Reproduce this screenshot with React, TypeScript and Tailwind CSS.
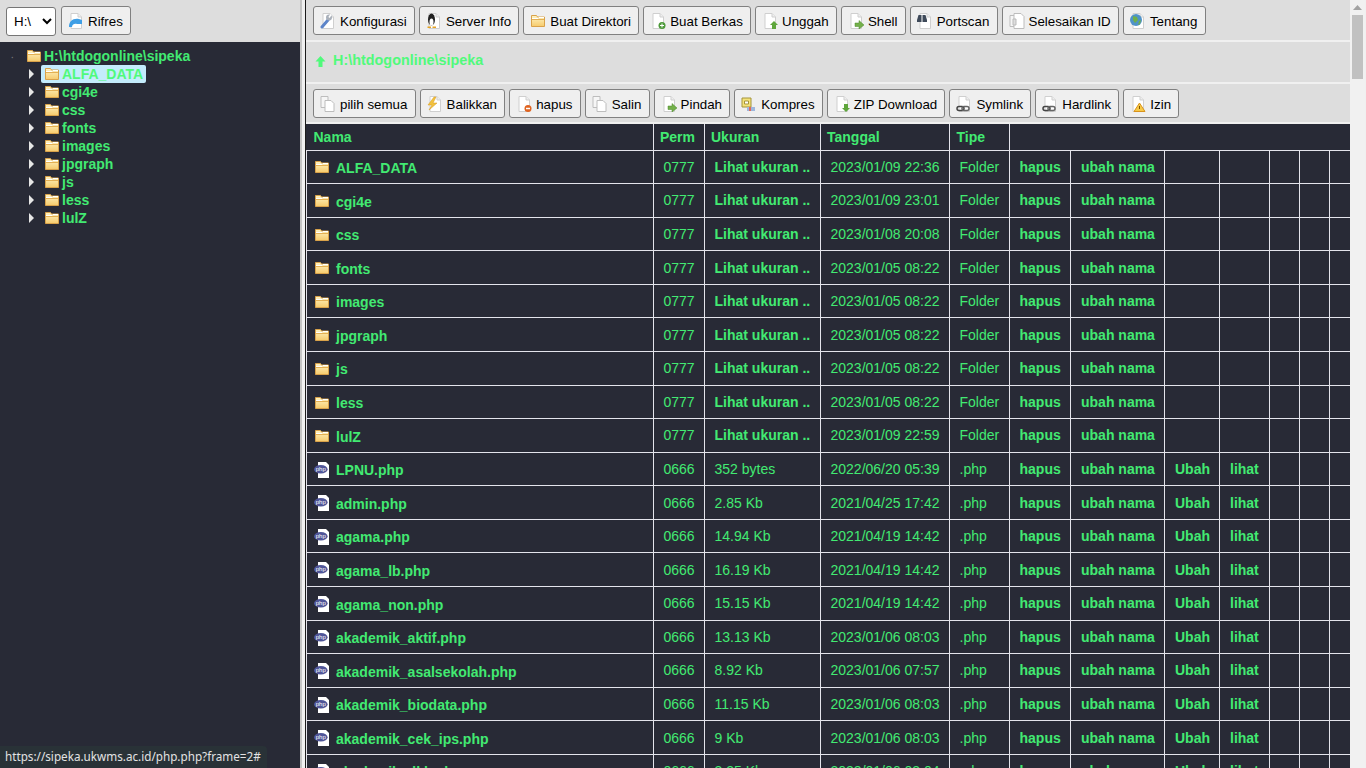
import React from "react";

const GREEN = "text-[#42ea72]";

const Page = ({ children }: { children?: React.ReactNode }) => (
  <svg width="16" height="16" viewBox="0 0 16 16" className="shrink-0">
    <path d="M3 .5h7l3.500 3.500v11.500H3z" fill="#fff" stroke="#cfcfcf" />
    <path d="M10 .5V4h3.500" fill="#eee" stroke="#cfcfcf" />
    {children}
  </svg>
);

const Folder = () => (
  <svg width="16" height="16" viewBox="0 0 16 16" className="shrink-0">
    <defs>
      <linearGradient id="fold" x1="0" y1="0" x2="0" y2="1">
        <stop offset="0" stopColor="#fff4c4" />
        <stop offset="1" stopColor="#f6cb6c" />
      </linearGradient>
    </defs>
    <path d="M1.500 13.500V2.500h5l1 1.500h7v9.500z" fill="url(#fold)" stroke="#d9a24a" />
    <path d="M2 5.500h6l1-1h5" stroke="#fff" fill="none" />
    <path d="M2 6.500h12" stroke="#e3b054" />
  </svg>
);

const PhpIcon = () => (
  <svg width="16" height="16" viewBox="0 0 16 16" className="shrink-0">
    <path d="M4 0h8l3 3v13H4z" fill="#fff" />
    <ellipse cx="6.800" cy="7.300" rx="6.800" ry="4.300" fill="#4f5598" />
    <text x="6.800" y="9.300" textAnchor="middle" fontSize="6" fontFamily="Liberation Sans" fontWeight="400" fill="#ffffff">php</text>
  </svg>
);

const wrench = (
  <Page>
    <path d="M2 14l6-7" stroke="#5d85c9" strokeWidth="3" strokeLinecap="round" />
    <circle cx="9" cy="4.500" r="3" fill="#aab1bb" />
    <path d="M9 4.500l2-3" stroke="#fff" strokeWidth="1.500" />
  </Page>
);
const tux = (
  <Page>
    <ellipse cx="5.500" cy="6.500" rx="3.500" ry="6" fill="#222" />
    <ellipse cx="5.500" cy="9" rx="2" ry="3.500" fill="#fff" />
    <path d="M1.500 13.500h3.500v1.500H1.500zM6.500 13.500h3.500v1.500H6.500z" fill="#e6a323" />
  </Page>
);
const plus = (
  <Page>
    <circle cx="12" cy="12.500" r="3.500" fill="#4d9a3a" />
    <path d="M10 12.500h4M12 10.500v4" stroke="#fff" />
  </Page>
);
const up = (
  <Page>
    <path d="M12 8l4 4h-2v4h-4v-4H8z" fill="#5fa63c" />
  </Page>
);
const right = (
  <Page>
    <path d="M7 10h4V7.500l5 4.500-5 4v-2.500H7z" fill="#74b04b" stroke="#4c8a2c" strokeWidth=".5" />
  </Page>
);
const down = (
  <Page>
    <path d="M10 8h4v4h2l-4 4-4-4h2z" fill="#5fa63c" />
  </Page>
);
const binoculars = (
  <Page>
    <path d="M0 7l1.500-5h3v7H0zM5.500 2h3L10 7v2H5.500z" fill="#3f4a5a" />
  </Page>
);
const copy = (
  <svg width="16" height="16" viewBox="0 0 16 16" className="shrink-0">
    <path d="M1 .5h7v11H1z" fill="#f6f6f6" stroke="#bdbdbd" />
    <path d="M5 4.500h6l3 3v8H5z" fill="#fff" stroke="#bdbdbd" />
  </svg>
);
const ids = (
  <svg width="16" height="16" viewBox="0 0 16 16" className="shrink-0">
    <path d="M1 2.500h7v11H1z" fill="#f6f6f6" stroke="#bdbdbd" />
    <path d="M5 .5h7l3 3v12H5z" fill="#fff" stroke="#bdbdbd" />
    <path d="M4 6h3v6H4z" fill="#ddd" stroke="#bbb" />
  </svg>
);
const globe = (
  <Page>
    <circle cx="6" cy="7" r="6" fill="#4f93c9" />
    <path d="M3 3l4 1 1 3-3 3-2-3zM9 8l2-1-1 4-2 1z" fill="#6fb04a" />
  </Page>
);
const bolt = (
  <Page>
    <path d="M7 1L1 9h4l-3 5 8-7H6l3-6z" fill="#f2c23e" stroke="#d89a1e" strokeWidth=".5" />
  </Page>
);
const minus = (
  <Page>
    <circle cx="12" cy="12.500" r="3.500" fill="#e0631f" />
    <path d="M10 12.500h4" stroke="#fff" strokeWidth="1.500" />
  </Page>
);
const compress = (
  <svg width="16" height="16" viewBox="0 0 16 16" className="shrink-0">
    <path d="M1 2h9v9H1z" fill="#f4e27a" stroke="#a4943a" />
    <path d="M3.500 5h4v3h-4z" fill="#fff" stroke="#a4943a" />
    <path d="M6 11h8v4H6z" fill="#9db7dd" />
    <path d="M9 11v4" stroke="#e06a5a" strokeWidth="2" />
  </svg>
);
const link = (
  <Page>
    <rect x="1" y="10.500" width="7" height="4" rx="2" fill="none" stroke="#444" strokeWidth="1.500" />
    <rect x="6" y="10.500" width="7" height="4" rx="2" fill="none" stroke="#666" strokeWidth="1.500" />
  </Page>
);
const warn = (
  <Page>
    <path d="M9.500 7l5.500 8.500H4z" fill="#f7c948" stroke="#d9931c" />
    <path d="M9.500 10v3" stroke="#7a5200" />
  </Page>
);
const refresh = (
  <Page>
    <path d="M1 14c0-6 4-9 10-8l3 1v4H9c-3-1-5 1-5 3z" fill="#3f9fe6" />
  </Page>
);

const Btn = ({ icon, label }: { icon: React.ReactNode; label: string }) => (
  <button className="flex items-center h-[29px] gap-1 pl-1.5 pr-[7.200px] bg-[#efefef] border border-[#808080] rounded-[3px] text-[13.333px] text-black whitespace-nowrap">
    {icon}
    <span className="pt-[2px]">{label}</span>
  </button>
);

const tree = ["ALFA_DATA", "cgi4e", "css", "fonts", "images", "jpgraph", "js", "less", "lulZ"];

const folders = [
  ["ALFA_DATA", "2023/01/09 22:36"],
  ["cgi4e", "2023/01/09 23:01"],
  ["css", "2023/01/08 20:08"],
  ["fonts", "2023/01/05 08:22"],
  ["images", "2023/01/05 08:22"],
  ["jpgraph", "2023/01/05 08:22"],
  ["js", "2023/01/05 08:22"],
  ["less", "2023/01/05 08:22"],
  ["lulZ", "2023/01/09 22:59"],
];

const files = [
  ["LPNU.php", "352 bytes", "2022/06/20 05:39"],
  ["admin.php", "2.85 Kb", "2021/04/25 17:42"],
  ["agama.php", "14.94 Kb", "2021/04/19 14:42"],
  ["agama_lb.php", "16.19 Kb", "2021/04/19 14:42"],
  ["agama_non.php", "15.15 Kb", "2021/04/19 14:42"],
  ["akademik_aktif.php", "13.13 Kb", "2023/01/06 08:03"],
  ["akademik_asalsekolah.php", "8.92 Kb", "2023/01/06 07:57"],
  ["akademik_biodata.php", "11.15 Kb", "2023/01/06 08:03"],
  ["akademik_cek_ips.php", "9 Kb", "2023/01/06 08:03"],
  ["akademik_dkk.php", "3.25 Kb", "2023/01/06 03:04"],
];

const td = "border border-[#e4e4ec] px-[9.500px] pt-[1px] align-middle whitespace-nowrap";

const Row = ({ icon, name, perm, size, date, type, file }: { icon: React.ReactNode; name: string; perm: string; size: string; date: string; type: string; file?: boolean }) => (
  <tr className="h-[33.590px]">
    <td className={td + " font-bold !pl-[7px]"}>
      <div className="flex items-center gap-[6px] h-[18px] pt-[2.400px]">
        <span className="mb-[2px]">{icon}</span>
        <span>{name}</span>
      </div>
    </td>
    <td className={td}>{perm}</td>
    <td className={td + (file ? "" : " font-bold")}>{size}</td>
    <td className={td}>{date}</td>
    <td className={td}>{type}</td>
    <td className={td + " font-bold"}>hapus</td>
    <td className={td + " font-bold !pl-[10px]"}>ubah nama</td>
    <td className={td + " font-bold !pl-[10px]"}>{file ? "Ubah" : ""}</td>
    <td className={td + " font-bold !pl-[10px]"}>{file ? "lihat" : ""}</td>
    <td className={td}></td>
    <td className={td}></td>
    <td className={td}></td>
  </tr>
);

export default function App() {
  return (
    <div className={"flex h-screen overflow-hidden bg-[#f0f0f0] text-[14px] font-['Liberation_Sans',Arial,sans-serif] relative"}>
      {/* left frame */}
      <div className="w-[300px] shrink-0 flex flex-col bg-[#282a36]">
        <div className="h-[42px] shrink-0 bg-[#dddddd] flex items-start gap-[5px] pl-[6px] pt-[6px]">
          <select className="w-[50px] h-[29px] mt-[1px] bg-white border border-[#767676] rounded-[3px] text-[13.333px] text-black pl-[3px]">
            <option>H:\</option>
          </select>
          <Btn icon={refresh} label="Rifres" />
        </div>
        <div className={"pt-[5px] font-bold " + GREEN}>
          <div className="flex items-center h-[18px] pl-[11px]">
            <span className="w-[15px] text-[#777] text-[8px] leading-none pt-[3px]">⋅</span>
            <Folder />
            <span className="ml-[2px]">H:\htdogonline\sipeka</span>
          </div>
          {tree.map((t, i) => (
            <div key={t} className="flex items-center h-[18px] pl-[29px]">
              <svg width="6" height="10" viewBox="0 0 6 10" className="shrink-0">
                <path d="M0 0l5 5-5 5z" fill="#e6e6e6" />
              </svg>
              <div className={"flex items-center ml-[6px] h-[18px] pl-[3px] pr-[3px] rounded-[2px] " + (i === 0 ? "bg-[#c4ecfc] text-[#50fa7b]" : "")}>
                <Folder />
                <span className="ml-[2px]">{t}</span>
              </div>
            </div>
          ))}
        </div>
      </div>
      {/* frame divider */}
      <div className="w-[5px] shrink-0 bg-[#f0f0f0] border-l-[2px] border-[#c4c4c4]" />
      <div className="w-px shrink-0 bg-[#1c1c1c]" />
      {/* right frame */}
      <div className="w-[1044px] shrink-0 flex flex-col bg-[#f0f0f0]">
        <div className="h-[40px] shrink-0 bg-[#dddddd] flex items-start gap-1 pl-[7px] pt-[6px]">
          <Btn icon={wrench} label="Konfigurasi" />
          <Btn icon={tux} label="Server Info" />
          <Btn icon={<Folder />} label="Buat Direktori" />
          <Btn icon={plus} label="Buat Berkas" />
          <Btn icon={up} label="Unggah" />
          <Btn icon={right} label="Shell" />
          <Btn icon={binoculars} label="Portscan" />
          <Btn icon={ids} label="Selesaikan ID" />
          <Btn icon={globe} label="Tentang" />
        </div>
        <div className="h-[40px] mt-[2px] shrink-0 bg-[#dddddd] flex items-center pl-[9px] text-[#50fa7b] text-[14.400px] font-bold pb-[2px]">
          <svg width="11" height="11" viewBox="0 0 11 11" className="mr-[7px] mt-[1px]">
            <path d="M5.500 0l5 5.500H7.500V11h-4V5.500H.5z" fill="#50fa7b" />
          </svg>
          H:\htdogonline\sipeka
        </div>
        <div className="h-[38px] mt-[2px] shrink-0 bg-[#dddddd] flex items-start gap-1 pl-[7px] pt-[5px]">
          <Btn icon={copy} label="pilih semua" />
          <Btn icon={bolt} label="Balikkan" />
          <Btn icon={minus} label="hapus" />
          <Btn icon={copy} label="Salin" />
          <Btn icon={right} label="Pindah" />
          <Btn icon={compress} label="Kompres" />
          <Btn icon={down} label="ZIP Download" />
          <Btn icon={link} label="Symlink" />
          <Btn icon={link} label="Hardlink" />
          <Btn icon={warn} label="Izin" />
        </div>
        <table className={"mt-[2px] table-fixed border-collapse w-[1044px] bg-[#282a36] " + GREEN}>
          <colgroup>
            <col className="w-[347px]" />
            <col className="w-[51px]" />
            <col className="w-[116px]" />
            <col className="w-[129px]" />
            <col className="w-[60px]" />
            <col className="w-[61px]" />
            <col className="w-[94px]" />
            <col className="w-[55px]" />
            <col className="w-[50px]" />
            <col className="w-[30px]" />
            <col className="w-[30px]" />
            <col className="w-[21px]" />
          </colgroup>
          <thead>
            <tr className="h-[26px] font-bold text-left">
              <th className="border-r border-[#e4e4ec] pl-[7px] pt-[1px]">Nama</th>
              <th className="border-r border-[#e4e4ec] pl-[6px] pt-[1px]">Perm</th>
              <th className="border-r border-[#e4e4ec] pl-[6px] pt-[1px]">Ukuran</th>
              <th className="border-r border-[#e4e4ec] pl-[6px] pt-[1px]">Tanggal</th>
              <th className="border-r border-[#e4e4ec] pl-[6.500px] pt-[1px]">Tipe</th>
              <th colSpan={7}></th>
            </tr>
          </thead>
          <tbody>
            {folders.map(([n, d]) => (
              <Row key={n} icon={<Folder />} name={n} perm="0777" size="Lihat ukuran .." date={d} type="Folder" />
            ))}
            {files.map(([n, s, d]) => (
              <Row key={n} icon={<PhpIcon />} name={n} perm="0666" size={s} date={d} type=".php" file />
            ))}
          </tbody>
        </table>
      </div>
      {/* scrollbar */}
      <div className="w-[15px] shrink-0 bg-[#f1f1f1] flex flex-col items-center">
        <svg width="9" height="6" viewBox="0 0 9 6" className="mt-[5px]">
          <path d="M4.500 0L9 5H0z" fill="#a3a3a3" />
        </svg>
        <div className="w-[11px] h-[64px] mt-[4px] bg-[#c1c1c1]" />
      </div>
      {/* link status overlay */}
      <div className="absolute left-0 bottom-0 h-[22px] w-[267px] bg-[#293237] rounded-tr-[4px] pl-[5px] text-[11.700px] leading-[20px] text-[#e3e3e3] font-['Noto_Sans',sans-serif] whitespace-nowrap">
        https://sipeka.ukwms.ac.id/php.php?frame=2#
      </div>
    </div>
  );
}
